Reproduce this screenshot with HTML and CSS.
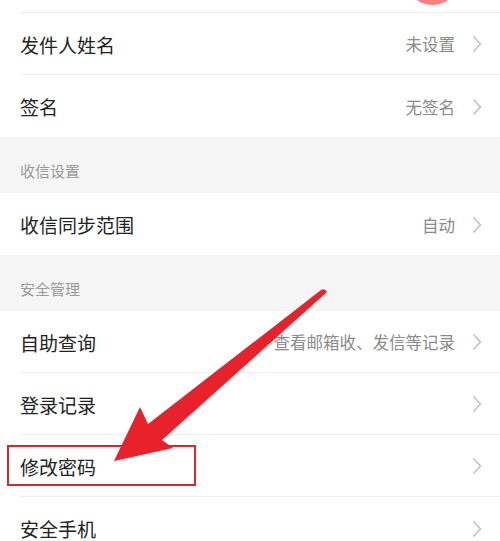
FILE: index.html
```html
<!DOCTYPE html>
<html lang="zh-CN">
<head>
<meta charset="utf-8">
<title>设置</title>
<link rel="stylesheet" href="styles.css">
</head>
<body>
<div class="page">
  <div class="top"><div class="avatar"></div></div>

  <div class="group">
    <div class="item"><div class="inner"><span class="title">发件人姓名</span><span class="value">未设置</span><svg class="chev" viewBox="0 0 10 18"><path d="M1.5 1.5 L8.5 9 L1.5 16.5"/></svg></div></div>
    <div class="item"><div class="inner"><span class="title">签名</span><span class="value">无签名</span><svg class="chev" viewBox="0 0 10 18"><path d="M1.5 1.5 L8.5 9 L1.5 16.5"/></svg></div></div>
  </div>

  <div class="header">收信设置</div>
  <div class="group">
    <div class="item"><div class="inner"><span class="title">收信同步范围</span><span class="value">自动</span><svg class="chev" viewBox="0 0 10 18"><path d="M1.5 1.5 L8.5 9 L1.5 16.5"/></svg></div></div>
  </div>

  <div class="header">安全管理</div>
  <div class="group">
    <div class="item"><div class="inner"><span class="title">自助查询</span><span class="value">查看邮箱收、发信等记录</span><svg class="chev" viewBox="0 0 10 18"><path d="M1.5 1.5 L8.5 9 L1.5 16.5"/></svg></div></div>
    <div class="item"><div class="inner"><span class="title">登录记录</span><svg class="chev" viewBox="0 0 10 18"><path d="M1.5 1.5 L8.5 9 L1.5 16.5"/></svg></div></div>
    <div class="item"><div class="inner"><span class="title">修改密码</span><svg class="chev" viewBox="0 0 10 18"><path d="M1.5 1.5 L8.5 9 L1.5 16.5"/></svg></div></div>
    <div class="item"><div class="inner"><span class="title">安全手机</span><svg class="chev" viewBox="0 0 10 18"><path d="M1.5 1.5 L8.5 9 L1.5 16.5"/></svg></div></div>
  </div>

  <div class="highlight"></div>
  <svg class="arrow" viewBox="0 0 500 541">
    <path d="M321 290 Q325 288 327 292 L162 440 L173 448 L114 461 L140 407 L148 424 Z"/>
  </svg>
</div>
</body>
</html>
```
FILE: styles.css
```css
* { box-sizing: border-box; }
html, body { margin: 0; padding: 0; }
body {
  background: #ffffff;
  font-family: "Noto Sans CJK SC", "Noto Sans", sans-serif;
  overflow: hidden;
}
.page {
  position: relative;
  width: 500px;
  height: 541px;
  overflow: hidden;
  background: #ffffff;
}
.top {
  height: 13px;
  margin-left: 20px;
  border-bottom: 1px solid #eeeeee;
  display: flex;
  justify-content: flex-end;
  padding-right: 41px;
  overflow: hidden;
}
.avatar {
  flex-shrink: 0;
  width: 53px;
  height: 53px;
  margin-top: -48px;
  border-radius: 50%;
  background: #f5827f;
}
.group { background: #ffffff; }
.item { padding-left: 20px; }
.inner {
  height: 62px;
  display: flex;
  align-items: center;
  padding-right: 18px;
  padding-top: 1px;
  border-bottom: 1px solid #efefef;
}
.item:last-child .inner { border-bottom: none; }
.title {
  flex: 1;
  font-size: 19px;
  color: #222222;
}
.value {
  font-size: 16.5px;
  color: #8a8a8a;
  margin-right: 17px;
}
.chev {
  width: 10px;
  height: 18px;
  fill: none;
  stroke: #bdbdbd;
  stroke-width: 1.4;
}
.header {
  height: 56px;
  background: #f5f5f5;
  padding: 23px 0 0 20px;
  font-size: 15px;
  color: #9a9a9a;
}
.highlight {
  position: absolute;
  left: 7px;
  top: 445px;
  width: 189px;
  height: 41px;
  border: 2px solid #d42a2f;
}
.arrow {
  position: absolute;
  left: 0;
  top: 0;
  width: 500px;
  height: 541px;
  fill: #e8212a;
}
```
